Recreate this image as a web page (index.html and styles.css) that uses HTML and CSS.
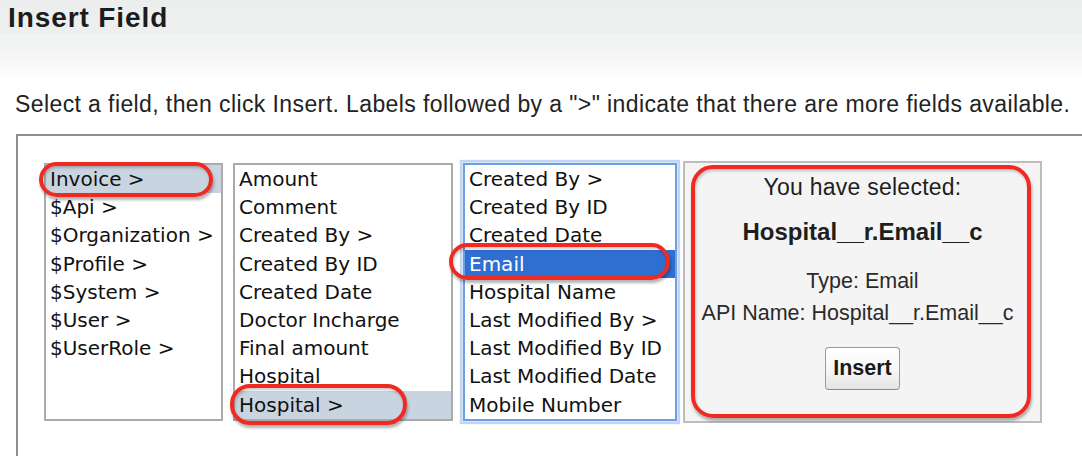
FILE: index.html
```html
<!DOCTYPE html>
<html>
<head>
<meta charset="utf-8">
<title>Insert Field</title>
<link rel="stylesheet" href="styles.css">
</head>
<body>
<div class="page">
  <div class="header">
    <h1 class="title">Insert Field</h1>
  </div>
  <p class="desc">Select a field, then click Insert. Labels followed by a "&gt;" indicate that there are more fields available.</p>
  <div class="box">
    <div class="row">
      <ul class="list list-1">
        <li class="opt sel">Invoice &gt;</li>
        <li class="opt">$Api &gt;</li>
        <li class="opt">$Organization &gt;</li>
        <li class="opt">$Profile &gt;</li>
        <li class="opt">$System &gt;</li>
        <li class="opt">$User &gt;</li>
        <li class="opt">$UserRole &gt;</li>
      </ul>
      <ul class="list list-2">
        <li class="opt">Amount</li>
        <li class="opt">Comment</li>
        <li class="opt">Created By &gt;</li>
        <li class="opt">Created By ID</li>
        <li class="opt">Created Date</li>
        <li class="opt">Doctor Incharge</li>
        <li class="opt">Final amount</li>
        <li class="opt">Hospital</li>
        <li class="opt sel">Hospital &gt;</li>
      </ul>
      <ul class="list list-3 focused">
        <li class="opt">Created By &gt;</li>
        <li class="opt">Created By ID</li>
        <li class="opt">Created Date</li>
        <li class="opt sel-active">Email</li>
        <li class="opt">Hospital Name</li>
        <li class="opt">Last Modified By &gt;</li>
        <li class="opt">Last Modified By ID</li>
        <li class="opt">Last Modified Date</li>
        <li class="opt">Mobile Number</li>
      </ul>
      <div class="panel">
        <div class="p-head">You have selected:</div>
        <div class="p-name">Hospital__r.Email__c</div>
        <div class="p-type">Type: Email</div>
        <div class="p-api">API Name: Hospital__r.Email__c</div>
        <button class="btn" type="button">Insert</button>
      </div>
    </div>
  </div>

  <div class="ring ring-invoice"></div>
  <div class="ring ring-hospital"></div>
  <div class="ring ring-email"></div>
  <div class="ring ring-panel"></div>
</div>
</body>
</html>
```
FILE: styles.css
```css
html, body {
  margin: 0;
  padding: 0;
  background: #ffffff;
  overflow: hidden;
}

.page {
  position: relative;
  width: 1082px;
  height: 456px;
  overflow: hidden;
  font-family: "Liberation Sans", Arial, sans-serif;
  color: #1e1e1e;
}

.header {
  height: 82px;
  padding: 2px 0 0 8px;
  box-sizing: border-box;
  background: linear-gradient(to bottom, #eceeee 0px, #eef0f0 33px, #f2f3f3 34px, #f3f4f4 50px, #fafafa 70px, #ffffff 82px);
}

.title {
  margin: 0;
  font-size: 28px;
  line-height: 32px;
  font-weight: bold;
  letter-spacing: 0.9px;
  color: #1c1c1c;
}

.desc {
  margin: 8px 0 0 0;
  padding-left: 15px;
  font-size: 23px;
  line-height: 28px;
  letter-spacing: 0.4px;
  white-space: nowrap;
  color: #222;
}

.box {
  margin: 16px 0 0 16px;
  width: 1100px;
  height: 360px;
  border: 2px solid #8e8e8e;
  box-sizing: border-box;
  padding: 25px 0 0 26px;
}

.row {
  display: flex;
  align-items: center;
  gap: 10px;
}

.list {
  margin: 0;
  padding: 0;
  list-style: none;
  height: 258px;
  box-sizing: border-box;
  border: 2px solid #ababab;
  background: #fff;
  font-family: "DejaVu Sans", Verdana, sans-serif;
  font-size: 20px;
  color: #111;
  overflow: hidden;
}

.list-1 { width: 179px; }
.list-2 { width: 220px; }
.list-3 { width: 214px; }

.list.focused {
  border-color: #6f9fe0;
  box-shadow: 0 0 0 1px #d6e5fa, 0 0 1px 3px rgba(120, 165, 230, 0.45);
}

.opt {
  height: 28.2px;
  line-height: 28.2px;
  padding-left: 4px;
  white-space: nowrap;
}

.opt.sel {
  background: #c9d4e1;
}

.opt.sel-active {
  background: #2e6fd1;
  color: #ffffff;
}

.panel {
  margin-left: -4px;
  width: 359px;
  height: 262px;
  box-sizing: border-box;
  border: 2px solid #bdbdbd;
  background: #f4f4f4;
  padding-top: 10px;
  display: flex;
  flex-direction: column;
  align-items: center;
  text-align: center;
  color: #1e1e1e;
}

.p-head {
  font-size: 23px;
  line-height: 28px;
  letter-spacing: 0.25px;
}

.p-name {
  margin-top: 17px;
  font-size: 24px;
  line-height: 28px;
  font-weight: bold;
}

.p-type {
  margin-top: 21px;
  font-size: 21.5px;
  line-height: 28px;
  color: #2a2a2a;
}

.p-api {
  margin-top: 4px;
  margin-right: 10px;
  font-size: 21.5px;
  line-height: 28px;
  white-space: nowrap;
  color: #2a2a2a;
}

.btn {
  margin-top: 20px;
  width: 75px;
  height: 43px;
  box-sizing: border-box;
  padding: 0;
  border: 1px solid #9a9a9a;
  border-bottom-color: #8a8a8a;
  border-radius: 4px;
  background: linear-gradient(to bottom, #ffffff 0%, #f6f6f6 55%, #e4e4e4 100%);
  font-family: "Liberation Sans", Arial, sans-serif;
  font-size: 21.5px;
  font-weight: bold;
  color: #1a1a1a;
}

/* annotation overlays */
.ring {
  position: absolute;
  box-sizing: border-box;
  border: 4px solid #ee2a22;
  box-shadow: 1px 3px 3px rgba(0, 0, 0, 0.3), inset 1px 2px 3px rgba(0, 0, 0, 0.22);
}

.ring-invoice {
  left: 39px;
  top: 162px;
  width: 174px;
  height: 35px;
  border-radius: 18px;
}

.ring-hospital {
  left: 230px;
  top: 384px;
  width: 177px;
  height: 41px;
  border-radius: 20px;
}

.ring-email {
  left: 449px;
  top: 243px;
  width: 221px;
  height: 37px;
  border-radius: 19px;
}

.ring-panel {
  left: 691px;
  top: 165px;
  width: 340px;
  height: 253px;
  border-radius: 22px;
}
```
